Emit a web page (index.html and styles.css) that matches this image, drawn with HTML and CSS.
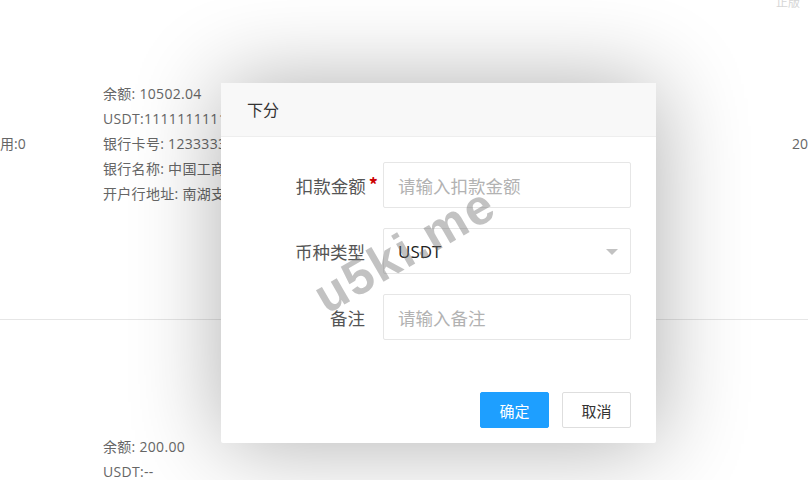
FILE: index.html
```html
<!DOCTYPE html>
<html lang="zh-CN">
<head>
<meta charset="utf-8">
<title>下分</title>
<link rel="stylesheet" href="styles.css">
</head>
<body>
<div class="page">
  <div class="topnote">正版</div>
  <div class="row row-first">
    <div class="cell c1">用:0</div>
    <div class="cell c2">
      <div>余额: 10502.04</div>
      <div>USDT:11111111111111111</div>
      <div>银行卡号: 1233333333333333</div>
      <div>银行名称: 中国工商银行</div>
      <div>开户行地址: 南湖支行</div>
    </div>
    <div class="cell c3">20</div>
  </div>
  <div class="row row-second">
    <div class="cell c1"></div>
    <div class="cell c2">
      <div>余额: 200.00</div>
      <div>USDT:--</div>
    </div>
  </div>
</div>

<div class="dialog">
  <div class="dialog-title">下分</div>
  <div class="dialog-body">
    <div class="form-row">
      <label class="form-label">扣款金额<span class="req">*</span></label>
      <div class="input placeholder">请输入扣款金额</div>
    </div>
    <div class="form-row">
      <label class="form-label">币种类型</label>
      <div class="input select"><span>USDT</span><i class="caret"></i></div>
    </div>
    <div class="form-row">
      <label class="form-label">备注</label>
      <div class="input placeholder">请输入备注</div>
    </div>
  </div>
  <div class="dialog-foot">
    <button class="btn btn-primary">确定</button>
    <button class="btn btn-plain">取消</button>
  </div>
</div>

<div class="watermark">u5ki.me</div>
</body>
</html>
```

FILE: styles.css
```css
html, body {
  margin: 0;
  padding: 0;
  background: #fff;
}
body {
  width: 808px;
  height: 480px;
  overflow: hidden;
  position: relative;
  font-family: "Open Sans", "Noto Sans CJK SC", sans-serif;
  font-size: 14px;
  color: #666;
}
.page {
  display: flex;
  flex-direction: column;
}
.topnote {
  height: 20px;
  line-height: 20px;
  margin-top: -7px;
  text-align: right;
  padding-right: 8px;
  color: #d6d6d6;
  font-size: 12px;
}
.row {
  display: flex;
  border-bottom: 1px solid #e6e6e6;
}
.row-first {
  height: 307px;
  align-items: center;
  box-sizing: border-box;
  padding-bottom: 46px;
}
.cell {
  line-height: 25px;
  white-space: nowrap;
}
.c1 {
  width: 103px;
  flex: none;
}
.c2 {
  flex: 1;
  overflow: hidden;
  letter-spacing: 0.3px;
}
.c3 {
  width: 16px;
  flex: none;
}
.row-second {
  border-bottom: none;
  padding-top: 114px;
}

.dialog {
  position: absolute;
  left: 221px;
  top: 83px;
  width: 435px;
  background: #fff;
  box-shadow: 1px 1px 90px rgba(0, 0, 0, 0.32);
  border-radius: 2px;
  color: #333;
  font-family: "Noto Sans CJK SC", sans-serif;
}
.dialog-title {
  height: 53px;
  line-height: 53px;
  padding: 0 26px;
  background: #f8f8f8;
  border-bottom: 1px solid #eee;
  font-size: 16px;
  color: #333;
}
.dialog-body {
  padding: 25px 25px 0 0;
  display: flex;
  flex-direction: column;
  gap: 20px;
}
.form-row {
  display: flex;
  align-items: center;
}
.form-label {
  width: 162px;
  box-sizing: border-box;
  padding-right: 18px;
  text-align: right;
  font-size: 17.5px;
  color: #555;
}
.req {
  color: #c00;
  font-size: 18px;
  font-weight: bold;
  margin-left: 3px;
  margin-right: -13px;
  position: relative;
  top: -1px;
}
.input {
  width: 248px;
  height: 46px;
  box-sizing: border-box;
  border: 1px solid #e6e6e6;
  border-radius: 2px;
  padding: 0 14px;
  display: flex;
  align-items: center;
  font-size: 17.5px;
}
.placeholder {
  color: #b2b2b2;
}
.select {
  justify-content: space-between;
  color: #222;
  font-family: "Open Sans", "Noto Sans CJK SC", sans-serif;
  font-size: 17px;
}
.caret {
  width: 0;
  height: 0;
  border-left: 6px solid transparent;
  border-right: 6px solid transparent;
  border-top: 6px solid #c2c2c2;
  margin-right: -2px;
  margin-top: 2px;
}
.dialog-foot {
  display: flex;
  justify-content: flex-end;
  gap: 13px;
  padding: 52px 25px 15px 0;
}
.btn {
  height: 36px;
  width: 69px;
  border-radius: 2px;
  font-family: inherit;
  font-size: 15px;
  padding: 0;
  cursor: pointer;
}
.btn-primary {
  background: #1e9fff;
  border: 1px solid #1e9fff;
  color: #fff;
}
.btn-plain {
  background: #fff;
  border: 1px solid #dedede;
  color: #333;
}

.watermark {
  position: absolute;
  left: 318px;
  top: 271px;
  font-family: "Liberation Sans", Arial, sans-serif;
  font-weight: bold;
  font-size: 50px;
  letter-spacing: 2px;
  color: rgba(110, 110, 110, 0.42);
  transform: rotate(-30deg);
  transform-origin: left center;
  white-space: nowrap;
  pointer-events: none;
}
```
